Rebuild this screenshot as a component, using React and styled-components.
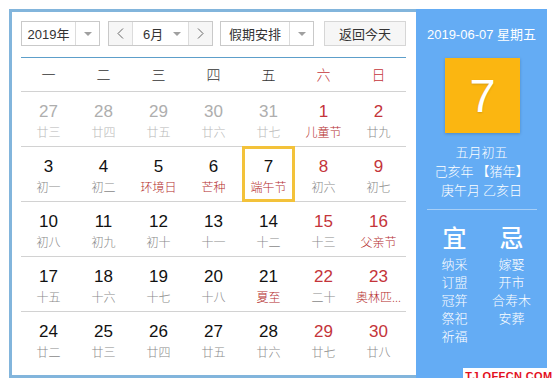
import React from 'react';
import styled, { createGlobalStyle, css } from 'styled-components';

const GlobalStyle = createGlobalStyle`
  body {
    margin: 0;
    background: #fff;
    font-family: "Liberation Sans", Arial, "Noto Sans CJK SC", sans-serif;
  }
`;

const StWrapper = styled.div`
  position: relative;
  display: flex;
  width: 538px;
  height: 369px;
  margin: 9px 0 0 9px;
`;

const StCalendarPanel = styled.div`
  width: 407px;
  box-sizing: border-box;
  border: 3px solid #82b5dc;
  border-right: none;
  padding: 9px 10px 9px 9px;
  background: #fff;
`;

const StToolbar = styled.div`
  display: flex;
  height: 25px;
`;

const StSelectBox = styled.div`
  display: flex;
  box-sizing: border-box;
  width: ${({ width }) => width}px;
  height: 25px;
  margin-right: ${({ gap }) => gap || 0}px;
  border: 1px solid #c9c9c9;
  background: #fff;
`;

const StSelectText = styled.div`
  flex: 1;
  display: flex;
  align-items: center;
  justify-content: ${({ left }) => (left ? 'flex-start' : 'center')};
  padding-left: ${({ left }) => (left ? '10px' : '0')};
  font-size: 13px;
  color: #333;
`;

const StSelectArrow = styled.div`
  display: flex;
  align-items: center;
  justify-content: center;
  width: 23px;
  ${({ divider }) =>
    divider &&
    css`
      border-left: 1px solid #dcdcdc;
    `};

  &::after {
    content: '';
    border-left: 4px solid transparent;
    border-right: 4px solid transparent;
    border-top: 4px solid #a0a0a0;
  }
`;

const StNavButton = styled.div`
  display: flex;
  align-items: center;
  justify-content: center;
  width: 23px;
  background: #f6f6f6;
  ${({ side }) =>
    side === 'left'
      ? css`
          border-right: 1px solid #dcdcdc;
        `
      : css`
          border-left: 1px solid #dcdcdc;
        `};
`;

const StTodayButton = styled.div`
  display: flex;
  align-items: center;
  justify-content: center;
  box-sizing: border-box;
  width: 82px;
  height: 25px;
  border: 1px solid #d6d6d6;
  background: #f6f6f6;
  font-size: 13px;
  color: #333;
`;

const StGridRow = styled.div`
  display: grid;
  grid-template-columns: repeat(7, 55px);
  height: ${({ head }) => (head ? 34 : 55)}px;
  box-sizing: border-box;
  border-top: 1px solid ${({ head }) => (head ? '#5d9fca' : '#d2d2d2')};
  margin-top: ${({ head }) => (head ? 11 : 0)}px;
`;

const StWeekName = styled.div`
  text-align: center;
  line-height: 33px;
  font-size: 14px;
  color: ${({ weekend }) => (weekend ? '#c4343a' : '#333')};
  font-family: "Noto Sans CJK SC", sans-serif;
  font-weight: 300;
`;

const StDayCell = styled.div`
  position: relative;
  text-align: center;
  padding-top: 10px;

  ${({ today }) =>
    today &&
    css`
      &::before {
        content: '';
        position: absolute;
        top: -1px;
        bottom: -1px;
        left: 1px;
        right: 1px;
        border: 3px solid #f3c23a;
      }
    `};
`;

const StDayNum = styled.div`
  font-size: 17px;
  line-height: 20px;
  color: ${({ tone }) =>
    tone === 'other' ? '#aeaeae' : tone === 'red' ? '#c4343a' : '#111'};
`;

const StDayLunar = styled.div`
  margin-top: 1px;
  font-size: 12px;
  line-height: 18px;
  white-space: nowrap;
  font-family: "Noto Sans CJK SC", sans-serif;
  font-weight: 300;
  color: ${({ tone }) =>
    tone === 'fest' ? '#b42d2d' : tone === 'other' ? '#b8b8b8' : '#8a8a8a'};
`;

const StInfoPanel = styled.div`
  width: 131px;
  background: #64acf4;
  color: #fff;
  display: flex;
  flex-direction: column;
  align-items: center;
  padding-top: 17px;
  box-sizing: border-box;
`;

const StInfoDate = styled.div`
  font-size: 13px;
  line-height: 18px;
`;

const StBigDay = styled.div`
  display: flex;
  align-items: center;
  justify-content: center;
  width: 75px;
  height: 75px;
  margin-top: 14px;
  margin-left: 2px;
  background: #fbb611;
  box-shadow: 0 1px 3px rgba(0, 0, 0, 0.2);
  font-size: 47px;
  color: #fff;
  text-shadow: 0 1px 2px rgba(0, 0, 0, 0.15);
`;

const StInfoLines = styled.div`
  margin-top: 9px;
  text-align: center;
  font-size: 13px;
  line-height: 19px;
  font-family: "Noto Sans CJK SC", sans-serif;
  font-weight: 300;
`;

const StDivider = styled.div`
  align-self: stretch;
  height: 1px;
  margin: 10px 10px 0 11px;
  background: #a7cff7;
`;

const StAlmanac = styled.div`
  align-self: stretch;
  display: grid;
  grid-template-columns: 57px 57px;
  padding-left: 10px;
  margin-top: 13px;
  text-align: center;
  font-family: "Noto Sans CJK SC", sans-serif;
`;

const StAlmanacTitle = styled.div`
  font-size: 24px;
  line-height: 28px;
  font-weight: 500;
  margin-bottom: 4px;
`;

const StAlmanacItem = styled.div`
  font-size: 13px;
  line-height: 18px;
  font-weight: 300;
`;

const StWatermark = styled.div`
  position: absolute;
  left: 454px;
  top: 359px;
  display: flex;
  align-items: center;
  justify-content: center;
  width: 92px;
  height: 16px;
  background: #fff;
  color: #e3101e;
  font-family: "Liberation Sans", Arial, sans-serif;
  font-weight: bold;
  font-size: 11px;
  line-height: 12px;
  letter-spacing: 0.4px;
  white-space: nowrap;
`;

const Chevron = ({ dir }) => (
  <svg width="7" height="11" viewBox="0 0 7 11">
    <polyline
      points={dir === 'left' ? '6,0.5 1,5.5 6,10.5' : '1,0.5 6,5.5 1,10.5'}
      fill="none"
      stroke="#666"
      strokeWidth="1"
    />
  </svg>
);

const WEEK_NAMES = ['一', '二', '三', '四', '五', '六', '日'];

// [day, lunar, flags] o=other month, f=festival, t=today
const WEEKS = [
  [['27', '廿三', 'o'], ['28', '廿四', 'o'], ['29', '廿五', 'o'], ['30', '廿六', 'o'], ['31', '廿七', 'o'], ['1', '儿童节', 'f'], ['2', '廿九']],
  [['3', '初一'], ['4', '初二'], ['5', '环境日', 'f'], ['6', '芒种', 'f'], ['7', '端午节', 'ft'], ['8', '初六'], ['9', '初七']],
  [['10', '初八'], ['11', '初九'], ['12', '初十'], ['13', '十一'], ['14', '十二'], ['15', '十三'], ['16', '父亲节', 'f']],
  [['17', '十五'], ['18', '十六'], ['19', '十七'], ['20', '十八'], ['21', '夏至', 'f'], ['22', '二十'], ['23', '奥林匹...', 'f']],
  [['24', '廿二'], ['25', '廿三'], ['26', '廿四'], ['27', '廿五'], ['28', '廿六'], ['29', '廿七'], ['30', '廿八']],
];

const GOOD = ['纳采', '订盟', '冠笄', '祭祀', '祈福'];
const BAD = ['嫁娶', '开市', '合寿木', '安葬'];

const App = () => {
  return (
    <>
      <GlobalStyle />
      <StWrapper>
        <StCalendarPanel>
          <StToolbar>
            <StSelectBox width={79} gap={8}>
              <StSelectText>2019年</StSelectText>
              <StSelectArrow divider />
            </StSelectBox>
            <StSelectBox width={105} gap={7}>
              <StNavButton side="left">
                <Chevron dir="left" />
              </StNavButton>
              <StSelectText left>6月</StSelectText>
              <StSelectArrow />
              <StNavButton side="right">
                <Chevron dir="right" />
              </StNavButton>
            </StSelectBox>
            <StSelectBox width={94} gap={10}>
              <StSelectText>假期安排</StSelectText>
              <StSelectArrow divider />
            </StSelectBox>
            <StTodayButton>返回今天</StTodayButton>
          </StToolbar>

          <StGridRow head>
            {WEEK_NAMES.map((name, i) => (
              <StWeekName key={name} weekend={i >= 5}>
                {name}
              </StWeekName>
            ))}
          </StGridRow>

          {WEEKS.map((week, w) => (
            <StGridRow key={w}>
              {week.map(([day, lunar, flags = ''], i) => {
                const other = flags.includes('o');
                const numTone = other ? 'other' : i >= 5 ? 'red' : 'normal';
                const lunarTone = flags.includes('f')
                  ? 'fest'
                  : other
                  ? 'other'
                  : 'normal';
                return (
                  <StDayCell key={i} today={flags.includes('t')}>
                    <StDayNum tone={numTone}>{day}</StDayNum>
                    <StDayLunar tone={lunarTone}>{lunar}</StDayLunar>
                  </StDayCell>
                );
              })}
            </StGridRow>
          ))}
        </StCalendarPanel>

        <StInfoPanel>
          <StInfoDate>2019-06-07 星期五</StInfoDate>
          <StBigDay>7</StBigDay>
          <StInfoLines>
            <div>五月初五</div>
            <div>己亥年 【猪年】</div>
            <div>庚午月 乙亥日</div>
          </StInfoLines>
          <StDivider />
          <StAlmanac>
            <div>
              <StAlmanacTitle>宜</StAlmanacTitle>
              {GOOD.map(item => (
                <StAlmanacItem key={item}>{item}</StAlmanacItem>
              ))}
            </div>
            <div>
              <StAlmanacTitle>忌</StAlmanacTitle>
              {BAD.map(item => (
                <StAlmanacItem key={item}>{item}</StAlmanacItem>
              ))}
            </div>
          </StAlmanac>
        </StInfoPanel>
        <StWatermark>TJ.OFFCN.COM</StWatermark>
      </StWrapper>
    </>
  );
};

export default App;
